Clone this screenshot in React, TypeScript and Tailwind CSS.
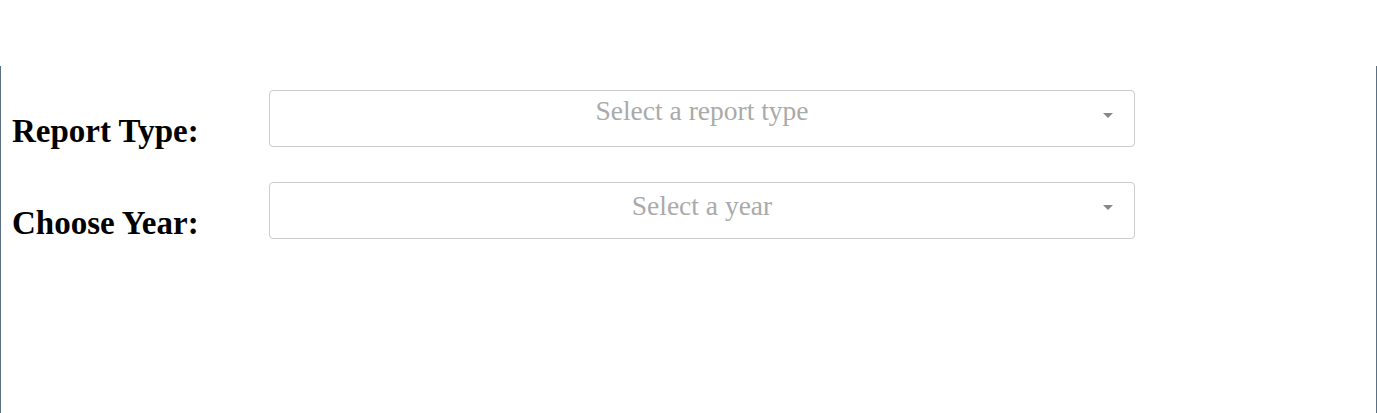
import React from "react";

function FakeSelect({ placeholder, lower }: { placeholder: string; lower?: boolean }) {
  return (
    <div className="relative w-[866px] h-[57px] border border-[#cccccc] rounded-[4px] bg-white">
      <div
        className={lower ? "pt-[3px] text-center text-[27.5px] leading-[39px] text-[#aaaaaa]" : "text-center text-[27.5px] leading-[39px] text-[#aaaaaa]"}
        style={{ fontFamily: '"Liberation Serif", "Times New Roman", serif' }}
      >
        {placeholder}
      </div>
      <span className="absolute right-[21px] top-[22px] w-0 h-0 border-t-[5px] border-t-[#888888] border-x-[5px] border-x-transparent" />
    </div>
  );
}

export default function App() {
  const serif = { fontFamily: '"Liberation Serif", "Times New Roman", serif' };
  return (
    <div className="w-[1377px] h-[413px] bg-white overflow-hidden" style={serif}>
      <div className="h-[66px]" />
      <div className="h-[347px] border-x border-[#5b7083] pt-[24px] pl-[11px] flex flex-col gap-[35px]">
        <div className="flex items-start h-[57px]">
          <div className="w-[257px] mt-[22px] text-[33px] leading-[38px] font-bold text-black">Report Type:</div>
          <FakeSelect placeholder="Select a report type" />
        </div>
        <div className="flex items-start h-[57px]">
          <div className="w-[257px] mt-[22px] text-[33px] leading-[38px] font-bold text-black">Choose Year:</div>
          <FakeSelect placeholder="Select a year" lower />
        </div>
      </div>
    </div>
  );
}
